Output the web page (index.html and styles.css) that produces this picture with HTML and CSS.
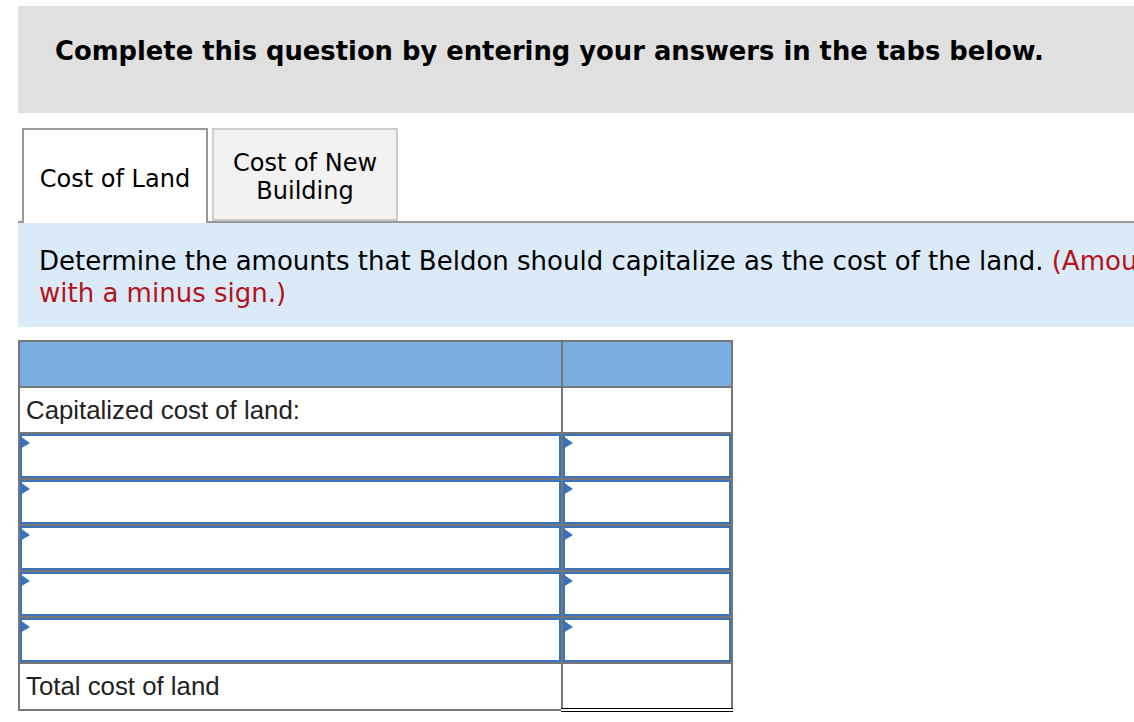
FILE: index.html
```html
<!DOCTYPE html>
<html>
<head>
<meta charset="utf-8">
<link rel="stylesheet" href="styles.css">
</head>
<body>
<div class="page">
  <div class="banner">Complete this question by entering your answers in the tabs below.</div>
  <div class="tabs">
    <div class="tab active">Cost of Land</div>
    <div class="tab">Cost of New<br>Building</div>
  </div>
  <div class="prompt">Determine the amounts that Beldon should capitalize as the cost of the land. <span class="note">(Amounts to be deducted should be indicated<br>with a minus sign.)</span></div>
  <table class="grid">
    <tr class="head"><th class="c1"></th><th class="c2"></th></tr>
    <tr><td class="label">Capitalized cost of land:</td><td></td></tr>
    <tr class="entry"><td><div class="field"><input type="text"></div></td><td><div class="field"><input type="text"></div></td></tr>
    <tr class="entry"><td><div class="field"><input type="text"></div></td><td><div class="field"><input type="text"></div></td></tr>
    <tr class="entry"><td><div class="field"><input type="text"></div></td><td><div class="field"><input type="text"></div></td></tr>
    <tr class="entry"><td><div class="field"><input type="text"></div></td><td><div class="field"><input type="text"></div></td></tr>
    <tr class="entry"><td><div class="field"><input type="text"></div></td><td><div class="field"><input type="text"></div></td></tr>
    <tr><td class="label">Total cost of land</td><td class="total"></td></tr>
  </table>
</div>
</body>
</html>
```
FILE: styles.css
```css
html, body {
  margin: 0;
  padding: 0;
  background: #fff;
  overflow: hidden;
}
body {
  font-family: "DejaVu Sans", Verdana, sans-serif;
  color: #000;
}
.page {
  width: 1760px;
  padding: 6px 0 0 18px;
}
.banner {
  background: #e0e0e0;
  height: 107px;
  box-sizing: border-box;
  padding: 30px 0 0 37px;
  font-weight: bold;
  font-size: 25.8px;
  line-height: 30px;
}
.tabs {
  margin-top: 15px;
  display: flex;
  gap: 4px;
  padding-left: 4px;
  border-bottom: 2px solid #999;
  height: 95px;
  box-sizing: border-box;
}
.tab {
  width: 186px;
  box-sizing: border-box;
  border: 2px solid #ccc;
  background: #f2f2f2;
  display: flex;
  align-items: center;
  justify-content: center;
  text-align: center;
  font-size: 24px;
  line-height: 28px;
  height: 93px;
  padding: 6px 0 2px;
}
.tab.active {
  border-color: #999;
  border-bottom: none;
  background: #fff;
  height: 95px;
  margin-bottom: -2px;
  padding: 4px 0 0;
  z-index: 1;
}
.prompt {
  background: #dbeaf8;
  height: 104px;
  box-sizing: border-box;
  padding: 22px 0 0 21px;
  font-size: 26px;
  line-height: 32px;
}
.note {
  color: #b5121b;
}
.grid {
  margin-top: 13px;
  border-collapse: collapse;
  width: 715px;
  font-family: "Liberation Sans", Arial, sans-serif;
  font-size: 25.8px;
  color: #222;
}
.grid th, .grid td {
  border: 2px solid #777;
  height: 44px;
  padding: 0;
}
.grid .c1 { width: 542px; }
.grid .c2 { width: 169px; }
.grid .head th {
  background: #7aaee0;
}
.grid .label {
  padding: 0 6px;
  text-align: left;
}
.field {
  position: relative;
  height: 44px;
}
.field::before {
  content: "";
  position: absolute;
  left: 0;
  top: 2px;
  border-left: 10px solid #3b73b9;
  border-top: 7px solid transparent;
  border-bottom: 6px solid transparent;
}
.field input {
  display: block;
  width: 100%;
  height: 100%;
  box-sizing: border-box;
  border: 2px solid #3b73b9;
  background: #fff;
  margin: 0;
  padding: 0;
  outline: none;
}
.grid .total {
  border-top: 2px solid #000;
  border-bottom: 4px double #000;
}
```
